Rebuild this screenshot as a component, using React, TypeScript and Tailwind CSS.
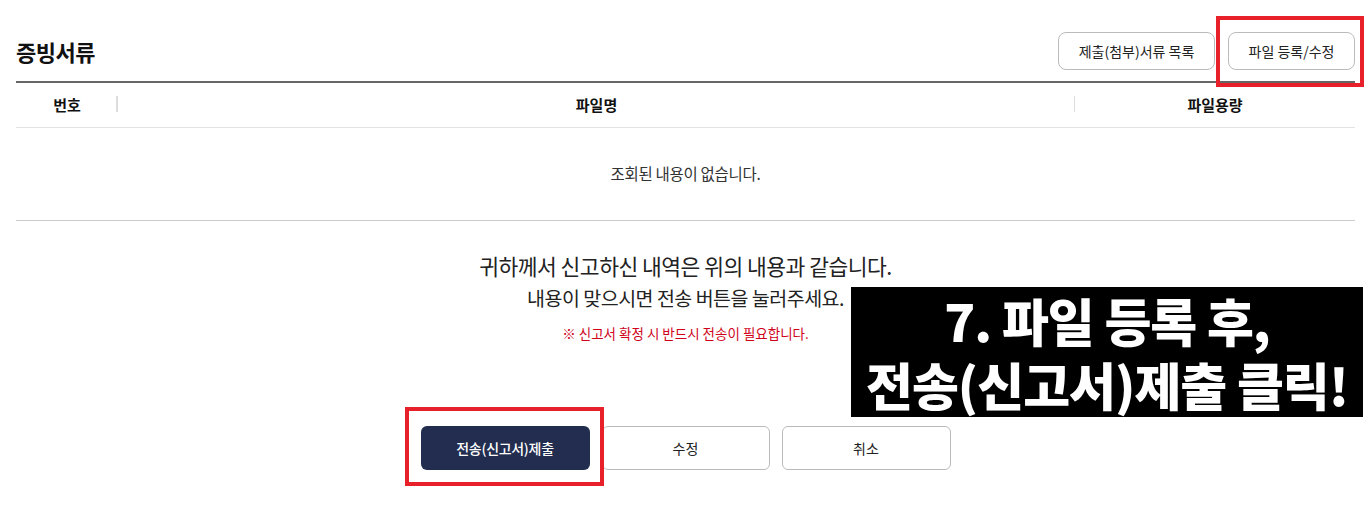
import React from "react";

const font = { fontFamily: '"Noto Sans CJK KR", "Noto Sans", sans-serif' };

export default function App() {
  return (
    <div className="relative w-[1371px] h-[509px] bg-white text-[#111]" style={font}>
      <div className="px-4">
        {/* title row */}
        <div className="flex items-center justify-between pt-8 pb-[11px]">
          <h2 className="text-[22px] font-bold tracking-[-0.5px] leading-[38px]">증빙서류</h2>
          <div className="flex gap-[13px]">
            <button className="h-[38px] w-[157px] rounded-lg border border-[#bbb] bg-white text-[14px] text-[#222]">
              제출(첨부)서류 목록
            </button>
            <button className="h-[38px] w-[127px] rounded-lg border border-[#bbb] bg-white text-[14px] text-[#222]">
              파일 등록/수정
            </button>
          </div>
        </div>

        {/* table */}
        <div className="border-t-2 border-[#666]">
          <div className="flex h-[45px] items-center border-b border-[#e3e3e3] text-[15px] font-bold">
            <div className="relative flex w-[102px] justify-center">
              번호
              <span className="absolute right-0 top-[2px] h-[16px] w-[2px] bg-[#ddd]" />
            </div>
            <div className="relative flex w-[957px] justify-center">
              파일명
              <span className="absolute right-0 top-[2px] h-[16px] w-px bg-[#ddd]" />
            </div>
            <div className="flex flex-1 justify-center">파일용량</div>
          </div>
          <div className="flex h-[93px] items-center justify-center border-b border-[#ccc] text-[15.5px] text-[#333] tracking-[-0.3px]">
            조회된 내용이 없습니다.
          </div>
        </div>

        {/* confirm message */}
        <div className="flex flex-col items-center pt-[30px]">
          <p className="text-[21.5px] leading-[30px] text-[#222] tracking-[-0.5px]">
            귀하께서 신고하신 내역은 위의 내용과 같습니다.
          </p>
          <p className="mt-[4px] text-[19.5px] leading-[26px] text-[#222] tracking-[-0.5px]">
            내용이 맞으시면 전송 버튼을 눌러주세요.
          </p>
          <p className="mt-[13px] text-[13.5px] leading-[18px] text-[#d0021b]">
            ※ 신고서 확정 시 반드시 전송이 필요합니다.
          </p>
          <div className="mt-[84px] flex gap-3">
            <button className="h-[44px] w-[169px] rounded-md bg-[#222d4f] text-[14px] font-medium text-white tracking-[-0.3px]">
              전송(신고서)제출
            </button>
            <button className="h-[44px] w-[168px] rounded-md border border-[#bbb] bg-white text-[14px] text-[#222]">
              수정
            </button>
            <button className="h-[44px] w-[169px] rounded-md border border-[#bbb] bg-white text-[14px] text-[#222]">
              취소
            </button>
          </div>
        </div>
      </div>

      {/* annotations */}
      <div className="absolute left-[1216px] top-[16px] h-[71px] w-[148px] border-4 border-[#e8202a]" />
      <div className="absolute left-[405px] top-[407px] h-[79px] w-[199px] border-4 border-[#e8202a]" />
      <div className="absolute left-[851px] top-[287px] flex h-[130px] w-[512px] flex-col items-center justify-center gap-[4px] bg-black text-[51px] font-black leading-[60px] tracking-[-1px] text-white">
        <span className="whitespace-nowrap">7. 파일 등록 후,</span>
        <span className="whitespace-nowrap">전송(신고서)제출 클릭!</span>
      </div>
    </div>
  );
}
